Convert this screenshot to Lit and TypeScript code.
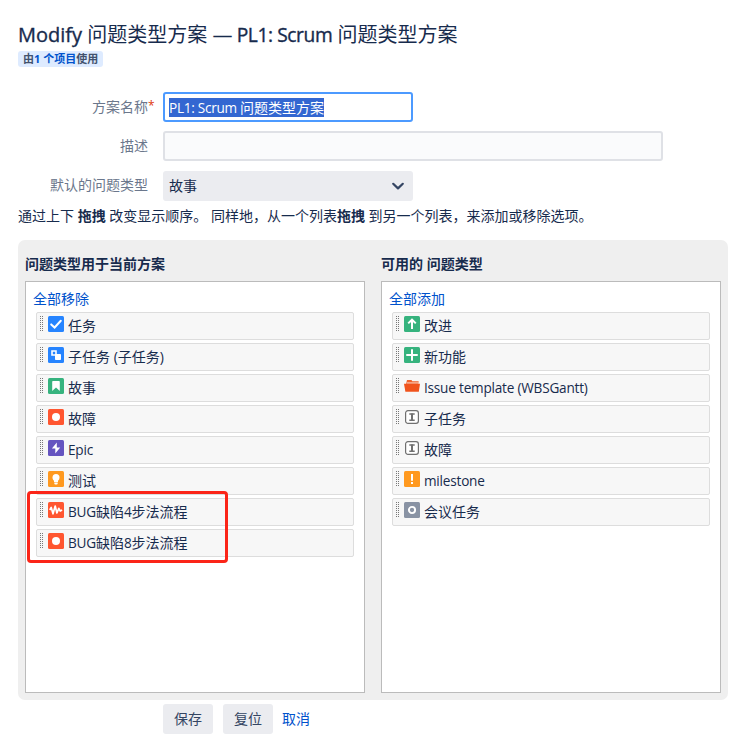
import { LitElement, html, css, svg } from "lit";
import { customElement, property } from "lit/decorators.js";

const tile = (fill: string, glyph: unknown) =>
  svg`<rect width="16" height="16" rx="1.5" fill=${fill}></rect>${glyph}`;

const bug = tile("#ff5630", svg`<circle cx="8" cy="8" r="4" fill="#fff"></circle>`);
const letter = svg`<rect x="1.6" y="1.6" width="12.8" height="12.8" rx="2.4" fill="#fff" stroke="#707070" stroke-width="1.2"></rect>
  <path d="M5.3 5.1h5.4M5.3 11.3h5.4" fill="none" stroke="#707070" stroke-width="1.5"></path><path d="M8 4.5v7" stroke="#707070" stroke-width="2"></path>`;

const icons: Record<string, unknown> = {
  task: tile("#2684ff", svg`<path d="M3.2 8.4 6.6 11.5 12.8 4.8" fill="none" stroke="#fff" stroke-width="2" stroke-linecap="round"></path>`),
  subtask: tile("#2684ff", svg`<path d="M4 4h4v4H4z" fill="none" stroke="#fff" stroke-width="1.6"></path><rect x="7" y="7" width="6" height="6" rx=".8" fill="#fff"></rect>`),
  story: tile("#36b37e", svg`<path d="M5 3h6a.8.8 0 0 1 .8.8V13L8 9.4 4.2 13V3.8A.8.8 0 0 1 5 3z" fill="#fff"></path>`),
  bug,
  epic: tile("#6554c0", svg`<path d="M8.8 2.6 3.9 8.4h3.4v5L12.2 7.6H8.8z" fill="#fff"></path>`),
  test: tile("#ff991f", svg`<circle cx="8" cy="6.4" r="3.5" fill="#fff"></circle><path d="M6 8h4v3H6zM6.3 11.6h3.4v1a1 1 0 0 1-1 .9H7.3a1 1 0 0 1-1-.9z" fill="#fff"></path>`),
  pulse: tile("#ff5630", svg`<path d="M1.8 8 3.2 5.4 5 11.8 7.2 4 8.9 11 10.8 6.4 12.2 9l1.9-1" fill="none" stroke="#fff" stroke-width="1.7" stroke-linejoin="round"></path>`),
  improve: tile("#36b37e", svg`<path d="M8 13V4M4.2 7.4 8 3.7l3.8 3.7" fill="none" stroke="#fff" stroke-width="2"></path>`),
  plus: tile("#36b37e", svg`<path d="M8 3v10M3 8h10" fill="none" stroke="#fff" stroke-width="2" stroke-linecap="round"></path>`),
  folder: svg`<path d="M2 6 3 2h4.5l.8 1.2h6.4l-.5 3z" fill="#f0622c"></path><path d="M2.8 4.5h11.6v1H2.6z" fill="#fff" opacity=".85"></path><path d="M0 5.8h16l-1.2 8H1.4z" fill="#f0531c"></path>`,
  letter,
  alert: tile("#ff991f", svg`<path d="M7 3h2v6.8H7zM7 11h2v2H7z" fill="#fff"></path>`),
  ring: tile("#8993a4", svg`<circle cx="8" cy="8" r="3.1" fill="none" stroke="#fff" stroke-width="1.9"></circle>`),
};

interface IssueType {
  icon: string;
  name: string;
}

const current: IssueType[] = [
  { icon: "task", name: "任务" },
  { icon: "subtask", name: "子任务 (子任务)" },
  { icon: "story", name: "故事" },
  { icon: "bug", name: "故障" },
  { icon: "epic", name: "Epic" },
  { icon: "test", name: "测试" },
  { icon: "pulse", name: "BUG缺陷4步法流程" },
  { icon: "bug", name: "BUG缺陷8步法流程" },
];

const available: IssueType[] = [
  { icon: "improve", name: "改进" },
  { icon: "plus", name: "新功能" },
  { icon: "folder", name: "Issue template (WBSGantt)" },
  { icon: "letter", name: "子任务" },
  { icon: "letter", name: "故障" },
  { icon: "alert", name: "milestone" },
  { icon: "ring", name: "会议任务" },
];

// Latin runs are set slightly smaller and tighter than the CJK text around them.
const tighten = (text: string) =>
  text.split(/([A-Za-z0-9][\x20-\x7e]*)/).map((part, i) => (i % 2 ? html`<span class="latin">${part}</span>` : part));

@customElement("issue-type-list")
export class IssueTypeList extends LitElement {
  @property() heading = "";
  @property() action = "";
  @property({ attribute: false }) items: IssueType[] = [];

  static styles = css`
    :host { display: block; width: 340px; }
    .heading { margin: 0; height: 34px; font-size: 14px; line-height: 33px; font-weight: 700; }
    .list { box-sizing: border-box; height: 412px; border: 1px solid #bbb; background: #fff; padding: 7px 10px 0; }
    .action { display: block; height: 23px; margin-left: -3px; line-height: 19px; color: #0052cc; }
    .rows { display: flex; flex-direction: column; gap: 3px; }
    .row { box-sizing: border-box; height: 28px; display: flex; align-items: flex-start; border: 1px solid #ddd; border-radius: 2px; background: #f7f7f7; padding: 3px 0 0 3px; }
    .grip { flex: none; width: 4px; height: 15px; margin-right: 4px; fill: #777; }
    .icon { flex: none; width: 16px; height: 16px; margin-right: 4px; }
    .name { line-height: 20px; white-space: nowrap; }
    .latin { font-size: 13.6px; letter-spacing: -0.21px; }
  `;

  render() {
    return html`
      <h2 class="heading">${this.heading}</h2>
      <div class="list">
        <a class="action">${this.action}</a>
        <div class="rows">
          ${this.items.map(
            (item) => html`<div class="row">
              <svg class="grip" viewBox="0 0 4 15" shape-rendering="crispEdges">
                ${[0, 2, 4, 6, 8, 10, 12, 14].map((y) => svg`<rect x="0" y=${y} width="1" height="1"></rect><rect x="2" y=${y} width="1" height="1"></rect>`)}
              </svg>
              <svg class="icon" viewBox="0 0 16 16">${icons[item.icon]}</svg>
              <span class="name">${tighten(item.name)}</span>
            </div>`,
          )}
        </div>
      </div>
    `;
  }
}

@customElement("app-root")
export class AppRoot extends LitElement {
  static styles = css`
    :host {
      display: block; position: relative; box-sizing: border-box; width: 744px; height: 737px; overflow: hidden;
      padding: 21px 16px 0 18px; background: #fff; color: #172b4d;
      font: 14px/20px "Open Sans", "Noto Sans CJK SC", sans-serif;
    }
    .title { margin: 0; height: 30px; font-size: 20px; line-height: 28px; font-weight: 400; white-space: nowrap; }
    .strong { -webkit-text-stroke: 0.35px currentColor; }
    .scheme { margin-left: -1px; font-size: 19.2px; letter-spacing: -0.4px; }
    .usage { display: block; width: 85px; height: 16px; box-sizing: border-box; padding-left: 5px; border-radius: 3px; background: #deebff; color: #42526e; font-size: 11px; line-height: 16px; font-weight: 700; white-space: nowrap; }
    .link { color: #0052cc; }
    .cancel { margin-left: -1px; }
    .form { display: grid; grid-template-columns: 130px auto; column-gap: 15px; row-gap: 9px; margin-top: 25px; }
    .label { text-align: right; color: #6b778c; line-height: 30px; white-space: nowrap; }
    .required { position: absolute; color: #de350b; font-size: 12px; line-height: 28px; }
    .input { box-sizing: border-box; height: 30px; border: 2px solid #dfe1e6; border-radius: 3px; background: #fafbfc; width: 500px; padding: 0 4px; display: flex; align-items: center; }
    .focused { width: 250px; background: #fff; border-color: #4c9aff; }
    .selected { background: #3367d1; color: #fff; line-height: 19px; height: 19px; white-space: nowrap; }
    .latin { font-size: 13.6px; letter-spacing: -0.28px; }
    .select { width: 250px; margin-top: 1px; background: #ebecf0; border-color: #ebecf0; justify-content: space-between; padding-right: 6px; }
    .chevron { width: 14px; height: 14px; }
    .hint { margin: 5px 0 0; height: 34px; line-height: 20px; white-space: nowrap; }
    .panel { box-sizing: border-box; width: 710px; height: 460px; padding: 7px; border-radius: 7px; background: #efefef; display: flex; gap: 16px; }
    .buttons { display: flex; gap: 10px; margin: 4px 0 0 145px; line-height: 30px; }
    .button { width: 50px; height: 30px; border-radius: 3px; background: #ebecf0; color: #344563; text-align: center; }
    .mark { position: absolute; left: 27px; top: 491px; width: 201px; height: 72px; box-sizing: border-box; border: 3px solid #fb2518; border-radius: 4px; }
  `;

  render() {
    return html`
      <h1 class="title"><span class="strong">Modify</span> 问题类型方案 — <span class="strong scheme">PL1: Scrum</span> 问题类型方案</h1>
      <span class="usage">由<a class="link">1 个项目</a>使用</span>
      <div class="form">
        <label class="label">方案名称<span class="required">*</span></label>
        <div class="input focused"><span class="selected"><span class="latin">PL1: Scrum </span>问题类型方案</span></div>
        <label class="label">描述</label>
        <div class="input"></div>
        <label class="label">默认的问题类型</label>
        <div class="input select">
          <span>故事</span>
          <svg class="chevron" viewBox="0 0 14 14"><path d="M2.2 4.8 7 9.4l4.8-4.6" fill="none" stroke="#344563" stroke-width="2.2" stroke-linecap="round" stroke-linejoin="round"></path></svg>
        </div>
      </div>
      <p class="hint">通过上下 <b>拖拽</b> 改变显示顺序。 同样地，从一个列表<b>拖拽</b> 到另一个列表，来添加或移除选项。</p>
      <div class="panel">
        <issue-type-list heading="问题类型用于当前方案" action="全部移除" .items=${current}></issue-type-list>
        <issue-type-list heading="可用的 问题类型" action="全部添加" .items=${available}></issue-type-list>
      </div>
      <div class="buttons">
        <div class="button">保存</div>
        <div class="button">复位</div>
        <a class="link cancel">取消</a>
      </div>
      <div class="mark"></div>
    `;
  }
}
